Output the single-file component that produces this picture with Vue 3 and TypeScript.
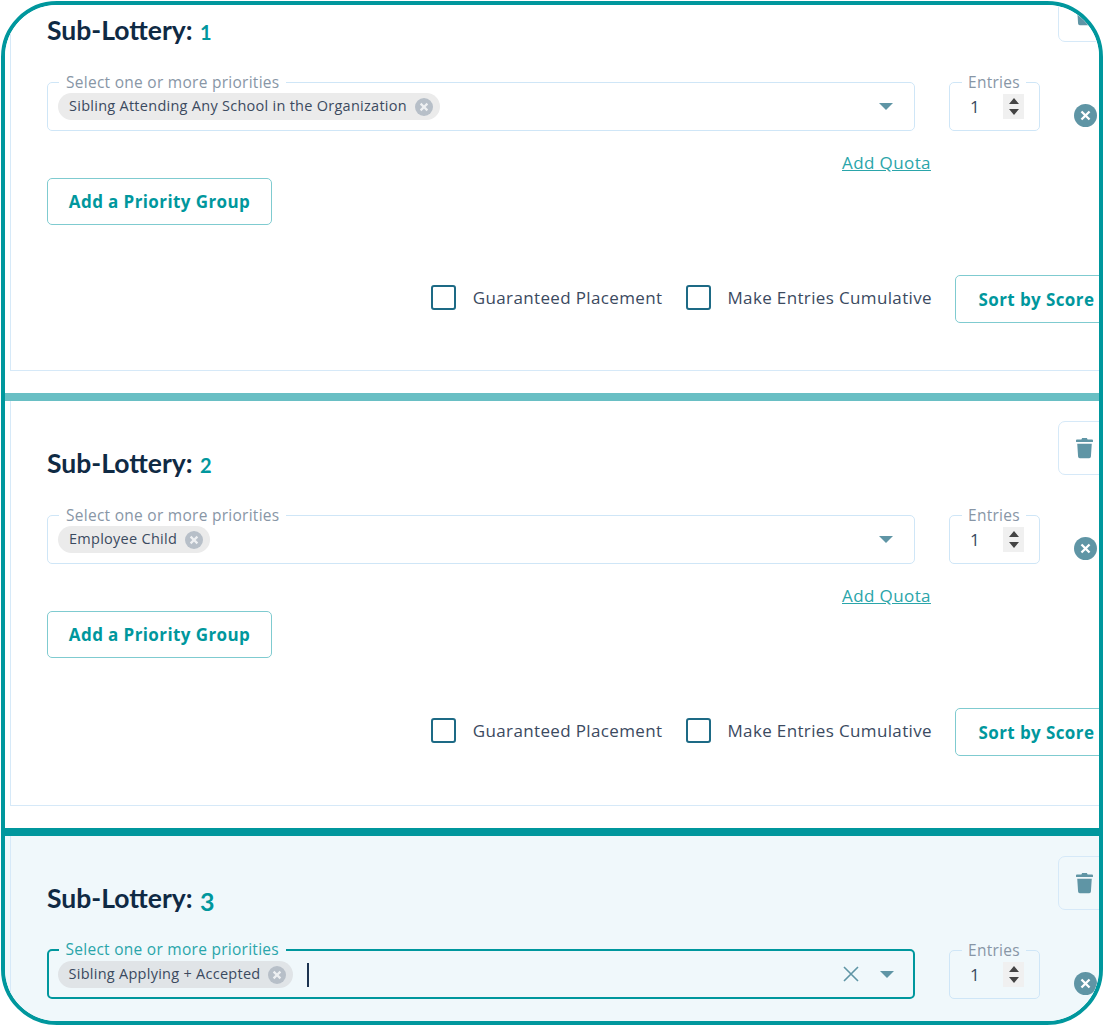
<script setup lang="ts">
interface Lottery {
  id: number
  chip: string
  bar: string
  active: boolean
}
const lotteries: Lottery[] = [
  { id: 1, chip: 'Sibling Attending Any School in the Organization', bar: 'bar-soft', active: false },
  { id: 2, chip: 'Employee Child', bar: 'bar-strong', active: false },
  { id: 3, chip: 'Sibling Applying + Accepted', bar: '', active: true },
]
</script>

<template>
  <div class="frame">
    <div class="track">
      <section v-for="l in lotteries" :key="l.id" class="section" :class="[l.bar, { active: l.active }]">
        <div class="card">
          <div class="head">
            <h2 class="title">Sub-Lottery: <span class="num">{{ l.id }}</span></h2>
            <button class="trash" type="button" aria-label="Delete">
              <svg width="17" height="22" viewBox="0 0 18 22">
                <path d="M6.5 0.5h5l.8 1.6H17a1 1 0 0 1 1 1v1a.6.6 0 0 1-.6.6H.6a.6.6 0 0 1-.6-.6v-1a1 1 0 0 1 1-1h4.7z" />
                <path d="M1.3 6.5h15.4l-.9 13.6a1.8 1.8 0 0 1-1.8 1.7H4a1.8 1.8 0 0 1-1.8-1.7z" />
              </svg>
            </button>
          </div>

          <div class="fields">
            <div class="select">
              <span class="select-label">Select one or more priorities</span>
              <span class="chip">
                <span class="chip-text">{{ l.chip }}</span>
                <svg class="chip-x" width="18" height="18" viewBox="0 0 18 18">
                  <circle cx="9" cy="9" r="9" />
                  <path d="M5.6 5.6l6.8 6.8M12.4 5.6l-6.8 6.8" />
                </svg>
              </span>
              <span v-if="l.active" class="cursor"></span>
              <svg v-if="l.active" class="clear" width="16" height="16" viewBox="0 0 16 16">
                <path d="M1 1l14 14M15 1L1 15" />
              </svg>
              <svg class="caret" width="14" height="7" viewBox="0 0 14 7"><path d="M0 0h14L7 7z" /></svg>
            </div>

            <div class="entries">
              <span class="select-label entries-label">Entries</span>
              <span class="value">1</span>
              <span class="spin">
                <svg width="10" height="17" viewBox="0 0 10 17">
                  <path d="M5 0l5 6H0zM0 11h10l-5 6z" />
                </svg>
              </span>
            </div>

            <svg class="remove" width="23" height="23" viewBox="0 0 24 24">
              <circle cx="12" cy="12" r="12" />
              <path d="M7.8 7.8l8.4 8.4M16.2 7.8l-8.4 8.4" />
            </svg>
          </div>

          <template v-if="!l.active">
            <a class="quota" href="#">Add Quota</a>
            <button class="btn group" type="button">Add a Priority Group</button>

            <div class="options">
              <label class="check"><span class="box"></span>Guaranteed Placement</label>
              <label class="check"><span class="box"></span>Make Entries Cumulative</label>
              <button class="btn sort" type="button">Sort by Score</button>
            </div>
          </template>
        </div>
      </section>
    </div>
  </div>
</template>

<style>
body { background: #fff; }
</style>

<style scoped>
.frame {
  box-sizing: border-box;
  width: 1102px;
  height: 1024px;
  margin: 1px 0 0 1px;
  border: 4px solid #00979d;
  border-radius: 56px;
  overflow: hidden;
  background: #fff;
  font-family: "Open Sans", "Liberation Sans", sans-serif;
  color: #3b4a5f;
}
.track { margin-top: -37px; }
.section {
  --bg: #fff;
  background: var(--bg);
  padding-bottom: 22px;
}
.section.active { --bg: #f0f8fb; }
.bar-soft { border-bottom: 8px solid #69bfc4; }
.bar-strong { border-bottom: 8px solid #00979d; }
.card {
  margin-left: 5px;
  border-left: 1px solid #d6e9f8;
  border-bottom: 1px solid #d6e9f8;
  padding: 20px 0 49px 36px;
}
.section:first-child .card { padding-bottom: 47px; }
.head {
  display: flex;
  align-items: flex-end;
  height: 54px;
}
.title {
  margin: 0 0 -5px;
  font-family: Lato, "Liberation Sans", sans-serif;
  font-size: 26.5px;
  line-height: 30px;
  font-weight: 700;
  color: #0f2a44;
}
.active .title { margin-bottom: -3px; }
.num {
  margin-left: 1px;
  color: #00979d;
  font-size: 20px;
}
.active .num { position: relative; top: 3px; font-size: 25px; }
.trash {
  flex: none;
  box-sizing: border-box;
  width: 60px;
  height: 54px;
  margin-left: auto;
  margin-right: -19px;
  padding: 0 0 0 17px;
  display: flex;
  align-items: center;
  border: 1px solid #d6e9f8;
  border-radius: 7px;
  background: transparent;
}
.trash path { fill: #5f95a5; }
.fields {
  display: flex;
  align-items: flex-start;
  margin-top: 40px;
}
.select {
  position: relative;
  box-sizing: border-box;
  flex: none;
  width: 868px;
  height: 49px;
  display: flex;
  align-items: center;
  padding: 0 21px 0 10px;
  border: 1px solid #cfe6f7;
  border-radius: 5px;
}
.active .select {
  height: 50px;
  margin-top: -1px;
  border: 2.5px solid #00979d;
  padding: 0 19.5px 0 8.5px;
}
.select-label {
  position: absolute;
  top: -10.5px;
  left: 11px;
  padding: 0 7px;
  background: var(--bg);
  font-size: 15.5px;
  letter-spacing: 0.27px;
  line-height: 18px;
  color: #8896a6;
  white-space: nowrap;
}
.active .select .select-label {
  top: -11px;
  left: 9.5px;
  color: #2aa5aa;
}
.chip {
  display: inline-flex;
  align-items: center;
  gap: 8px;
  height: 27px;
  padding: 0 7px 0 11px;
  border-radius: 14px;
  background: #ebebeb;
  font-size: 14.5px;
  letter-spacing: 0.27px;
  color: #3b4a5f;
  white-space: nowrap;
}
.chip-text { margin-top: -2px; }
.active .chip { background: #e0e4e7; margin-top: 1px; }
.chip-x circle { fill: #b7bfc8; }
.chip-x path { stroke: #eef0f2; stroke-width: 2.2; fill: none; }
.cursor {
  width: 1.5px;
  height: 24px;
  margin: 1px 0 0 14px;
  background: #1c3350;
}
.clear {
  margin-left: auto;
}
.clear path { stroke: #5f95a5; stroke-width: 1.6; fill: none; }
.caret {
  margin-left: auto;
}
.active .caret { margin-left: 21px; }
.caret path { fill: #5f95a5; }
.entries {
  position: relative;
  box-sizing: border-box;
  flex: none;
  width: 91px;
  height: 49px;
  margin-left: 34px;
  display: flex;
  align-items: center;
  padding: 0 15px 0 20px;
  border: 1px solid #cfe6f7;
  border-radius: 5px;
}
.entries .entries-label { left: 12px; padding: 0 6px; }
.value { font-size: 17px; margin-top: -1px; color: #3b4a5f; }
.spin {
  margin-left: auto;
  width: 21px;
  height: 25px;
  display: flex;
  align-items: center;
  justify-content: center;
  background: #f0f0f0;
}
.spin path { fill: #444; }
.remove {
  flex: none;
  margin: 22px 0 0 34px;
}
.remove circle { fill: #5f95a5; }
.remove path { stroke: #fff; stroke-width: 2.4; fill: none; }
.quota {
  display: block;
  width: max-content;
  margin: 22px 0 5px 795px;
  font-size: 17px;
  letter-spacing: 0.4px;
  line-height: 20px;
  color: #2aa5aa;
}
.btn {
  box-sizing: border-box;
  border: 1.5px solid #7fcbd0;
  border-radius: 5px;
  background: transparent;
  font-family: inherit;
  font-size: 17px;
  letter-spacing: 0.4px;
  font-weight: 700;
  color: #00979d;
  white-space: nowrap;
}
.group {
  display: block;
  width: 225px;
  height: 47px;
  padding: 0;
}
.options {
  display: flex;
  align-items: center;
  justify-content: flex-end;
  margin: 50px -20px 0 0;
}
.check {
  display: flex;
  align-items: center;
  gap: 17px;
  margin: 0 24px 4px 0;
  font-size: 17px;
  letter-spacing: 0.36px;
  color: #3b4a5f;
}
.check:nth-child(2) { margin-right: 23px; gap: 16px; }
.box {
  box-sizing: border-box;
  width: 25px;
  height: 25px;
  border: 2.5px solid #1d6a85;
  border-radius: 3px;
}
.sort {
  flex: none;
  width: 164px;
  height: 48px;
  padding: 0 0 0 22.5px;
  text-align: left;
}
</style>
